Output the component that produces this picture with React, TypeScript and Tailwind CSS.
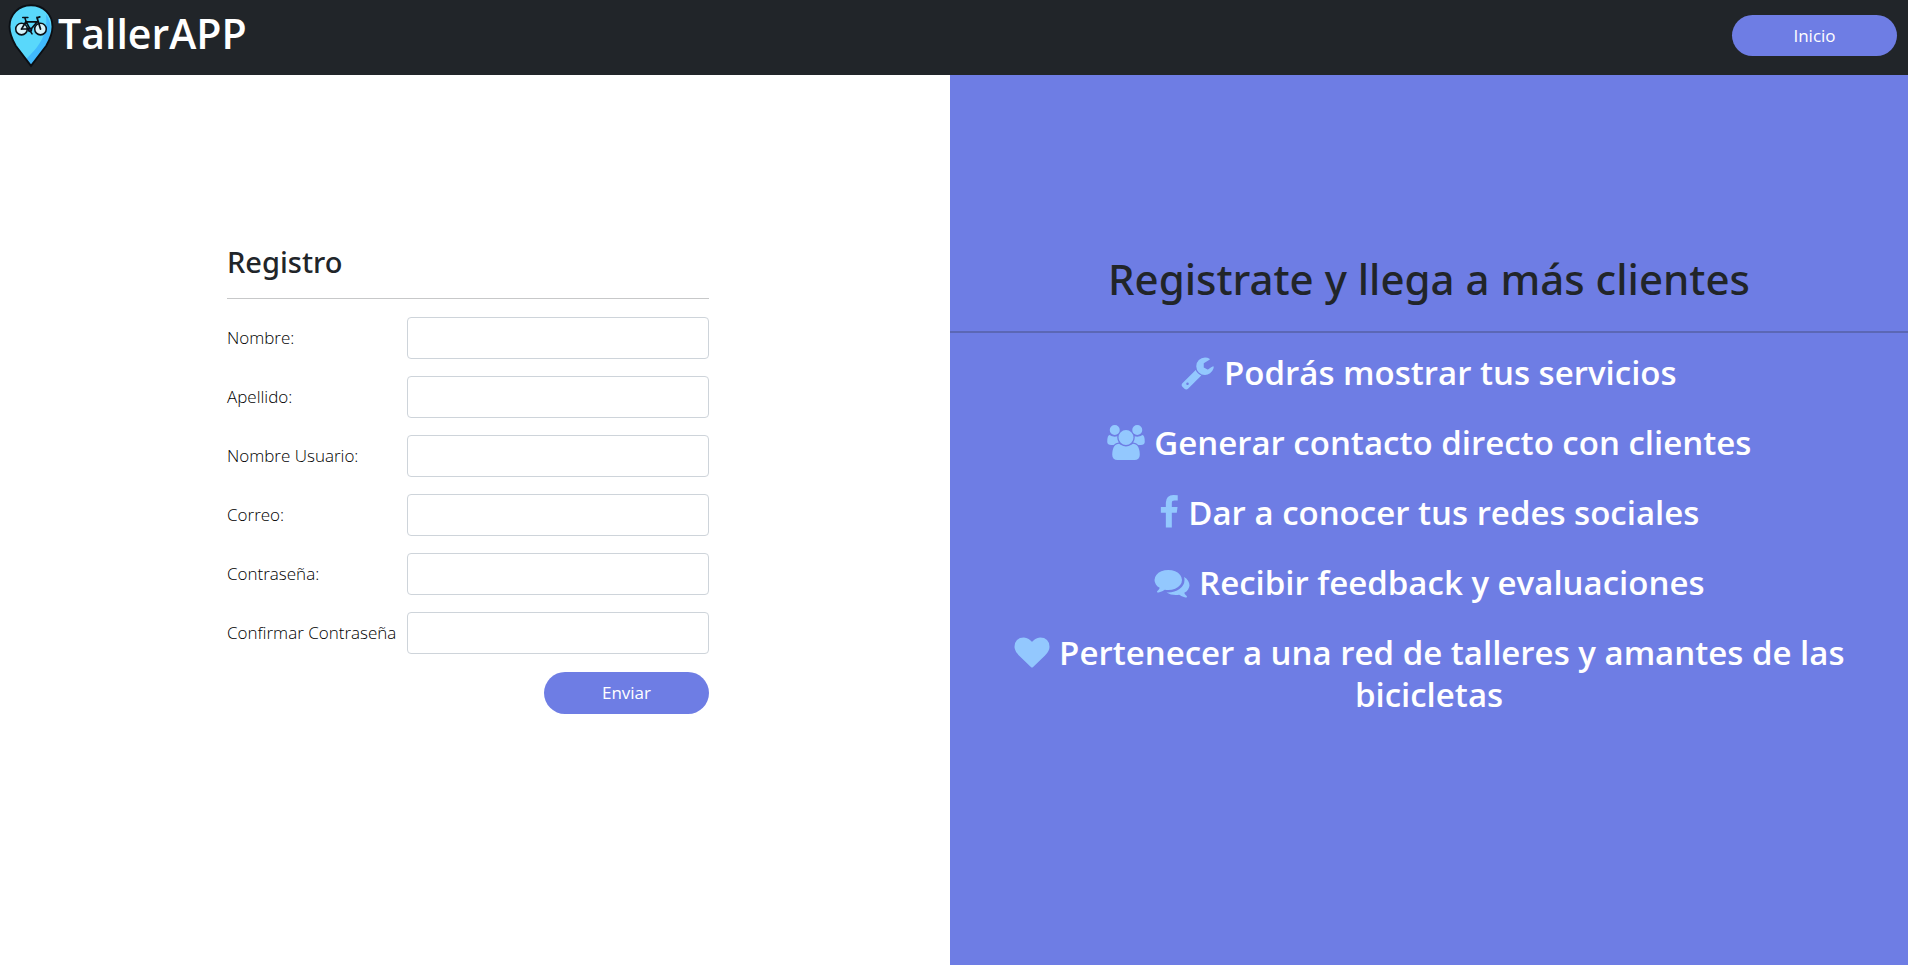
import { useState } from "react";

type Feature = { text: string; width: string; viewBox: string; path: string };

const features: Feature[] = [
  {
    text: "Podrás mostrar tus servicios",
    width: "w-[33px]",
    viewBox: "0 0 1664 1792",
    path: "M384 1472q0-26-19-45t-45-19-45 19-19 45 19 45 45 19 45-19 19-45zm644-420l-682 682q-37 37-90 37-52 0-91-37l-106-108q-38-36-38-90 0-53 38-91l681-681q39 98 114.5 173.5t173.5 114.5zm634-435q0 39-23 106-47 134-164.5 217.5t-258.5 83.5q-185 0-316.5-131.5t-131.5-316.5 131.5-316.5 316.5-131.5q58 0 121.5 16.5t107.5 46.5q16 11 16 28t-16 28l-293 169v224l193 107q5-3 79-48.5t135.5-81 70.5-35.5q15 0 23.5 10t8.5 25z",
  },
  {
    text: "Generar contacto directo con clientes",
    width: "w-[38px]",
    viewBox: "0 0 1920 1792",
    path: "M593 896q-162 5-265 128h-134q-82 0-138-40.5t-56-118.5q0-353 124-353 6 0 43.5 21t97.5 42.5 119 21.5q67 0 133-23-5 37-5 66 0 139 81 256zm1071 637q0 120-73 189.5t-194 69.5h-874q-121 0-194-69.5t-73-189.5q0-53 3.5-103.5t14-109 26.5-108.5 43-97.5 62-81 85.5-53.5 111.5-20q10 0 43 21.5t73 48 107 48 135 21.5 135-21.5 107-48 73-48 43-21.5q61 0 111.5 20t85.5 53.5 62 81 43 97.5 26.5 108.5 14 109 3.5 103.5zm-1024-1277q0 106-75 181t-181 75-181-75-75-181 75-181 181-75 181 75 75 181zm704 384q0 159-112.5 271.5t-271.5 112.5-271.5-112.5-112.5-271.5 112.5-271.5 271.5-112.5 271.5 112.5 112.5 271.5zm576 225q0 78-56 118.5t-138 40.5h-134q-103-123-265-128 81-117 81-256 0-29-5-66 66 23 133 23 59 0 119-21.5t97.5-42.5 43.5-21q124 0 124 353zm-128-609q0 106-75 181t-181 75-181-75-75-181 75-181 181-75 181 75 75 181z",
  },
  {
    text: "Dar a conocer tus redes sociales",
    width: "w-5",
    viewBox: "384 0 1024 1792",
    path: "M1343 12v264h-157q-86 0-116 36t-30 108v189h293l-39 296h-254v759h-306v-759h-255v-296h255v-218q0-186 104-288.5t277-102.5q147 0 228 12z",
  },
  {
    text: "Recibir feedback y evaluaciones",
    width: "w-9",
    viewBox: "0 0 1792 1792",
    path: "M1408 768q0 139-94 257t-256.5 186.5-353.5 68.5q-86 0-176-16-124 88-278 128-36 9-86 16h-3q-11 0-20.5-8t-11.5-21q-1-3-1-6.5t.5-6.5 2-6l2.5-5 3.5-5.5 4-5 4.5-5 4-4.5q5-6 23-25t26-29.5 22.5-29 25-38.5 20.5-44q-124-72-195-177t-71-224q0-139 94-257t256.5-186.5 353.5-68.5 353.5 68.5 256.5 186.5 94 257zm384 256q0 120-71 224.5t-195 176.5q10 24 20.5 44t25 38.5 22.5 29 26 29.5 23 25q1 1 4 4.5t4.5 5 4 5 3.5 5.5l2.5 5 2 6 .5 6.5-1 6.5q-3 14-13 22t-22 7q-50-7-86-16-154-40-278-128-90 16-176 16-271 0-472-132 58 4 88 4 161 0 309-45t264-129q125-92 192-212t67-254q0-77-23-152 129 71 204 187t75 245z",
  },
  {
    text: "Pertenecer a una red de talleres y amantes de las bicicletas",
    width: "w-9",
    viewBox: "0 0 1792 1792",
    path: "M896 1664q-26 0-44-18l-624-602q-10-8-27.5-26t-55.5-65.5-68-97.5-53.5-121-23.5-138q0-220 127-344t351-124q62 0 126.5 21.5t120 58 95.5 68.5 76 68q36-36 76-68t95.5-68.5 120-58 126.5-21.5q224 0 351 124t127 344q0 221-229 450l-623 600q-18 18-44 18z",
  },
];

const fields = [
  { id: "nombre", label: "Nombre:", type: "text" },
  { id: "apellido", label: "Apellido:", type: "text" },
  { id: "usuario", label: "Nombre Usuario:", type: "text" },
  { id: "correo", label: "Correo:", type: "email" },
  { id: "contrasena", label: "Contraseña:", type: "password" },
  { id: "confirmar", label: "Confirmar Contraseña", type: "password" },
];

function Logo() {
  return (
    <svg viewBox="0 0 44 62" className="h-[64px] w-[46px] shrink-0" aria-hidden="true">
      <path d="M22 1.200C10 1.200 1.200 10 1.200 22c0 6 2.400 12 6 18.500L22 60l14.800-19.500c3.600-6.500 6-12.500 6-18.500C42.800 10 34 1.200 22 1.200z" fill="#59d8fb" />
      <path d="M36.500 10c5.500 8 6.500 17 1 28.500L22 59l-4.500-6C28 43 39 31 36.500 10z" fill="#40b9fd" />
      <path d="M22 1.200C10 1.200 1.200 10 1.200 22c0 6 2.400 12 6 18.500L22 60l14.800-19.500c3.600-6.500 6-12.500 6-18.500C42.800 10 34 1.200 22 1.200z" fill="none" stroke="#0b0f14" strokeWidth="1.800" />
      <g stroke="#0b1118" strokeWidth="1.500" strokeLinecap="round" strokeLinejoin="round">
        <circle cx="12.800" cy="24.300" r="5.600" fill="#d5f2fa" />
        <circle cx="31.200" cy="24.300" r="5.600" fill="#d5f2fa" />
        <path d="M12.800 24.300l4.400-7.300 4.300 8 6.800-8M17.200 17.300h11M27.800 13l3.400 11.300M27.800 13.500l2.700-1" fill="none" strokeWidth="1.700" />
        <path d="M12.800 24.300h8.700M17.200 17l-1.200-3.800M14 13h5" fill="none" />
        <circle cx="21" cy="25" r="1.600" fill="#16257a" />
        <path d="M21.500 26.500l1.500 2.500" fill="none" />
      </g>
    </svg>
  );
}

export default function App() {
  const [values, setValues] = useState<Record<string, string>>({});

  return (
    <div className="flex min-h-screen flex-col bg-white font-['Open_Sans','Noto_Sans',sans-serif] text-[#212529]">
      <header className="flex h-[75px] items-start justify-between bg-[#212529] pr-[11px] pl-2">
        <a href="#" className="flex items-start gap-1 pt-1 text-white">
          <Logo />
          <span className="text-[41px] leading-[58px] font-semibold">TallerAPP</span>
        </a>
        <button type="button" className="mt-[15px] h-[41px] w-[165px] rounded-full bg-[#6e7de4] text-[17px] text-white">
          Inicio
        </button>
      </header>

      <main className="grid flex-1 grid-cols-[475fr_479fr]">
        <section className="flex justify-center pt-[168px] pr-[14px]">
          <form className="w-[482px]" onSubmit={(e) => e.preventDefault()}>
            <h2 className="font-['Noto_Sans'] text-[29px] leading-[38px] font-medium">Registro</h2>
            <hr className="mt-[17px] mb-[18px] border-[#c7c8c9]" />
            <div className="flex flex-col gap-[17px]">
              {fields.map((f) => (
                <div key={f.id} className="flex items-center">
                  <label htmlFor={f.id} className="w-[180px] shrink-0 text-[17px] leading-[26px] font-light whitespace-nowrap text-black">
                    {f.label}
                  </label>
                  <input
                    id={f.id}
                    type={f.type}
                    value={values[f.id] ?? ""}
                    onChange={(e) => setValues({ ...values, [f.id]: e.target.value })}
                    className="h-[42px] min-w-0 flex-1 rounded-[4px] border border-[#ced4da] bg-white px-3 text-[17px]"
                  />
                </div>
              ))}
              <button type="submit" className="mt-px h-[42px] w-[165px] self-end rounded-full bg-[#6e7de4] text-[17px] text-white">
                Enviar
              </button>
            </div>
          </form>
        </section>

        <section className="bg-[#6e7de4] pt-[177px] text-center">
          <h1 className="font-['Noto_Sans'] text-[42px] leading-[53px] font-medium">Registrate y llega a más clientes</h1>
          <hr className="mt-[26px] mb-[19px] border-t-2 border-[#5b67b5]" />
          <ul className="flex flex-col gap-7 px-[60px] text-[33px] leading-[42px] font-semibold text-white">
            {features.map((f) => (
              <li key={f.text}>
                <svg viewBox={f.viewBox} className={`${f.width} mr-px inline-block h-[35px] align-[-5px] text-[#93c8fe]`} fill="currentColor" aria-hidden="true">
                  <path d={f.path} />
                </svg>{" "}
                {f.text}
              </li>
            ))}
          </ul>
        </section>
      </main>
    </div>
  );
}
